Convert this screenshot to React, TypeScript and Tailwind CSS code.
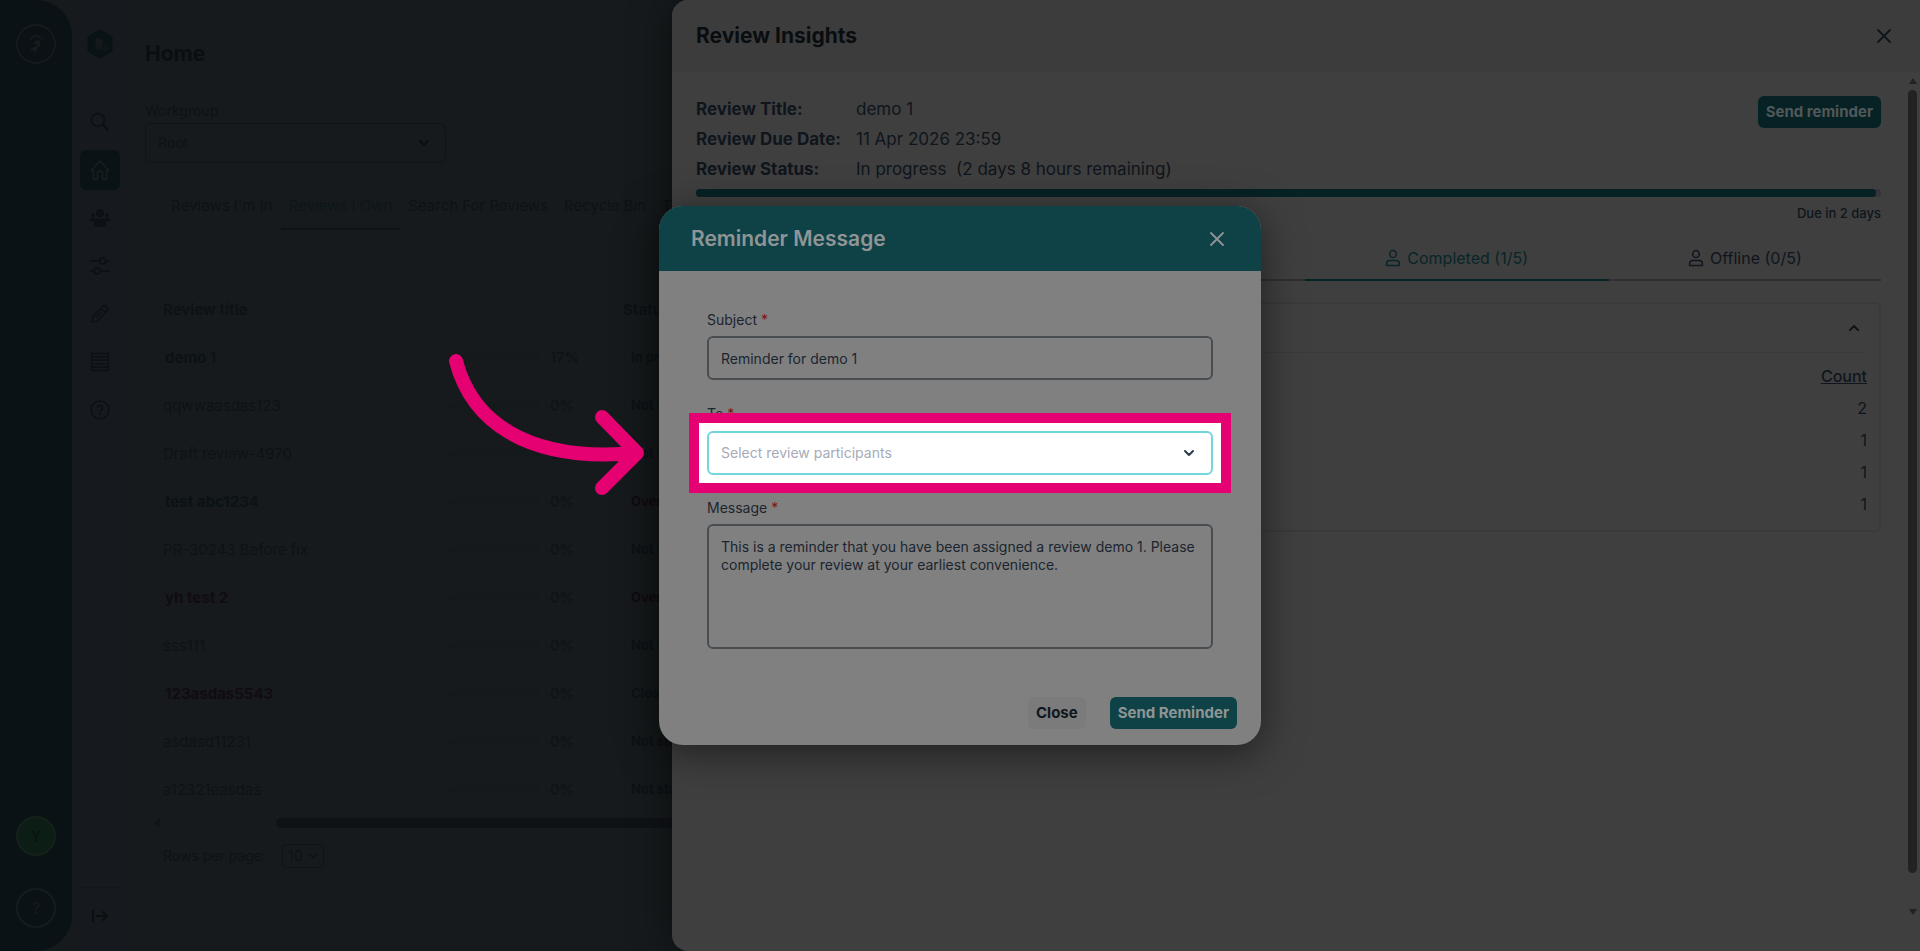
import React from "react";

type Row = {
  title: string;
  tone: "link" | "plain" | "late";
  progress: number;
  status: string;
  statusTone: "plain" | "late";
};

const rows: Row[] = [
  { title: "demo 1", tone: "link", progress: 17, status: "In progress", statusTone: "plain" },
  { title: "qqwwaasdas123", tone: "plain", progress: 0, status: "Not started", statusTone: "plain" },
  { title: "Draft review-4970", tone: "plain", progress: 0, status: "Not started", statusTone: "plain" },
  { title: "test abc1234", tone: "link", progress: 0, status: "Overdue", statusTone: "late" },
  { title: "PR-30243 Before fix", tone: "plain", progress: 0, status: "Not started", statusTone: "plain" },
  { title: "yh test 2", tone: "late", progress: 0, status: "Overdue", statusTone: "late" },
  { title: "sss111", tone: "plain", progress: 0, status: "Not started", statusTone: "plain" },
  { title: "123asdas5543", tone: "late", progress: 0, status: "Closed", statusTone: "plain" },
  { title: "asdasd11231", tone: "plain", progress: 0, status: "Not started", statusTone: "plain" },
  { title: "a12321easdas", tone: "plain", progress: 0, status: "Not started", statusTone: "plain" },
];

const titleTone = {
  link: "pl-[19px] font-bold text-[#0b1216]",
  plain: "pl-[17px] text-[#0e1216]",
  late: "pl-[19px] font-bold text-[#110c12]",
};

const counts = [2, 1, 1, 1];

function Chevron({ className }: { className: string }) {
  return (
    <svg viewBox="0 0 12 12" className={className} fill="none" stroke="currentColor" strokeWidth="2" strokeLinecap="round" strokeLinejoin="round" aria-hidden="true">
      <path d="M2 4l4 4 4-4" />
    </svg>
  );
}

function Cross({ className }: { className: string }) {
  return (
    <svg viewBox="0 0 16 16" className={className} fill="none" stroke="currentColor" strokeWidth="1.8" strokeLinecap="round" aria-hidden="true">
      <path d="M2 2l12 12M14 2L2 14" />
    </svg>
  );
}

function PersonIcon() {
  return (
    <svg viewBox="0 0 16 18" className="h-[18px] w-4" fill="none" stroke="currentColor" strokeWidth="1.5" aria-hidden="true">
      <ellipse cx="8" cy="5" rx="3.3" ry="3.6" />
      <path d="M1.6 16.4v-1.6a3.2 3.2 0 0 1 3.2-3.2h6.4a3.2 3.2 0 0 1 3.2 3.2v1.6z" strokeLinejoin="round" />
    </svg>
  );
}

function AppRail() {
  return (
    <nav aria-label="Applications" className="flex w-[72px] shrink-0 flex-col items-center rounded-r-[36px] bg-[#0a1215] pt-6 pb-[23px]">
      <a href="#" aria-label="Platform home" className="text-[#171b1e]">
        <svg viewBox="0 0 40 40" className="size-10" fill="none" aria-hidden="true">
          <circle cx="20" cy="20" r="19" stroke="currentColor" strokeWidth="1.8" />
          <path d="M13.5 15.5L20.5 11l7 4.5" stroke="currentColor" strokeWidth="1.8" />
          <path d="M18 18l4-2 2 1v5l-4 3-1-2 2-2v-1.500l-3 1zM15 24l3.500-1.500 2.500 1.500v3l-3 2-.500-3-2.500.500z" fill="currentColor" />
        </svg>
      </a>
      <div className="mt-auto flex flex-col items-center gap-8">
        <button aria-label="Account" className="flex size-10 items-center justify-center rounded-full border-2 border-[#15201b] bg-[#0b1d14] text-base text-[#0a1013]">Y</button>
        <button aria-label="Help" className="flex size-10 items-center justify-center rounded-full border-2 border-[#151c1f] text-base text-[#171c20]">?</button>
      </div>
    </nav>
  );
}

function ModuleRail() {
  const item = "flex size-10 items-center justify-center rounded-md text-[#0d1014]";
  return (
    <nav aria-label="Reviews" className="flex w-[58px] shrink-0 flex-col items-center border-r border-[#14171b] bg-[#16191d] pt-6 pr-px">
      <a href="#" aria-label="Reviews" className="flex size-10 items-center justify-center">
        <svg viewBox="0 0 26 30" className="h-[30px] w-[26px]" aria-hidden="true">
          <path d="M13 .5l12.500 7v15L13 29.500.500 22.500v-15z" fill="#091215" />
          <path d="M8.500 9h4.500l3 3v3.500a3 3 0 0 0-2 5H8.500z" fill="#14191c" />
          <path d="M13.500 9l2.800 2.800h-2.800z" fill="#14191c" />
          <circle cx="17.300" cy="17.700" r="3" fill="none" stroke="#14191c" strokeWidth="1.300" />
          <path d="M16 17.700l1 1 1.700-1.800" fill="none" stroke="#14191c" />
        </svg>
      </a>
      <div className="mt-[38px] flex flex-col gap-2">
        <a href="#" aria-label="Search" className={item}>
          <svg viewBox="0 0 20 20" className="size-5" fill="none" stroke="currentColor" strokeWidth="1.600" aria-hidden="true">
            <circle cx="8" cy="8" r="6.500" />
            <path d="M12.800 12.800L18.500 18.500" strokeWidth="2" />
          </svg>
        </a>
        <a href="#" aria-label="Home" className="flex size-10 items-center justify-center rounded-md bg-[#091316] text-[#181d20]">
          <svg viewBox="0 0 20 20" className="size-5" fill="none" stroke="currentColor" strokeWidth="1.500" strokeLinejoin="round" aria-hidden="true">
            <path d="M10 1L1 10.500h2.500v8.700h4v-5.700a2.500 2.500 0 0 1 5 0v5.700h4v-8.700H19z" />
          </svg>
        </a>
        <a href="#" aria-label="Groups" className={item}>
          <svg viewBox="0 0 20 20" className="size-5" fill="currentColor" aria-hidden="true">
            <circle cx="10" cy="5" r="4" />
            <circle cx="3" cy="7.200" r="2" />
            <circle cx="17" cy="7.200" r="2" />
            <path d="M0 13.500V12q0-2 2-2h2.500q1.500 1 5.500 1t5.500-1H18q2 0 2 2v1.500h-4V19H4v-5.500z" />
          </svg>
        </a>
        <a href="#" aria-label="Settings" className={item}>
          <svg viewBox="0 0 20 20" className="size-5" fill="none" stroke="currentColor" strokeWidth="1.700" aria-hidden="true">
            <path d="M0 5h9M16 5h4M0 15h3.500M10.500 15H20" />
            <circle cx="12.700" cy="5" r="3" />
            <circle cx="7" cy="15" r="3" />
          </svg>
        </a>
        <a href="#" aria-label="Edit" className={item}>
          <svg viewBox="0 0 20 20" className="size-5" fill="none" stroke="currentColor" strokeWidth="1.500" strokeLinejoin="round" aria-hidden="true">
            <path d="M2 18l1-5.500L12.800 2.200a2 2 0 0 1 2.900 0l1.500 1.500a2 2 0 0 1 0 2.900L7.500 17zM11 4.500L15 8.500M6 13.500l5-5" />
          </svg>
        </a>
        <a href="#" aria-label="List" className={item}>
          <svg viewBox="0 0 20 20" className="size-5" fill="none" stroke="currentColor" strokeWidth="1.500" aria-hidden="true">
            <rect x="1.500" y="1.500" width="17" height="17" rx="1" />
            <path d="M2 5h16M2 8.300h16M2 11.700h16M2 15h16" />
          </svg>
        </a>
        <a href="#" aria-label="Help" className={item}>
          <svg viewBox="0 0 20 20" className="size-5" fill="none" stroke="currentColor" strokeWidth="1.500" aria-hidden="true">
            <circle cx="10" cy="10" r="9" />
            <path d="M7.500 8a2.500 2.500 0 1 1 3.700 2.200q-1.200.700-1.200 1.800M10 13.500v1.700" />
          </svg>
        </a>
      </div>
      <div className="mt-auto flex h-16 w-10 justify-center border-t border-[#14171a] pt-5">
        <button aria-label="Expand menu" className="h-4 text-[#0b0f12]">
          <svg viewBox="0 0 16 14" className="h-[14px] w-4" fill="none" stroke="currentColor" strokeWidth="1.800" aria-hidden="true">
            <path d="M1 1v12M4 7h11M10.500 2.500L15 7l-4.500 4.500" />
          </svg>
        </button>
      </div>
    </nav>
  );
}

function HomePage() {
  return (
    <main className="flex min-w-0 flex-1 flex-col overflow-hidden pt-10 pl-[15px] text-[#0d1216]">
      <h1 className="text-[21px] leading-7 font-bold text-[#0a0e12]">Home</h1>
      <div className="mt-8 flex flex-col">
        <label htmlFor="workgroup" className="h-[23px] text-sm leading-[22px]">Workgroup</label>
        <div className="relative w-[301px]">
          <select id="workgroup" className="h-10 w-full appearance-none rounded-md border border-[#0f1418] pl-3 text-sm">
            <option>Root</option>
          </select>
          <Chevron className="pointer-events-none absolute top-[14px] right-4 size-3 text-[#0b0f13]" />
        </div>
      </div>
      <section className="mt-[17px] w-[1740px] rounded-md border border-[#14181b]">
        <div role="tablist" className="flex px-[17px] text-[15px] leading-[22px]">
          <button role="tab" aria-selected="false" className="px-2 pt-[14px] pb-[13px]">Reviews I'm In</button>
          <button role="tab" aria-selected="true" className="border-b-2 border-[#0a1417] px-2 pt-[14px] pb-[11px] text-[#0c161b]">Reviews I Own</button>
          <button role="tab" aria-selected="false" className="px-2 pt-[14px] pb-[13px]">Search For Reviews</button>
          <button role="tab" aria-selected="false" className="px-2 pt-[14px] pb-[13px]">Recycle Bin</button>
          <button role="tab" aria-selected="false" className="px-2 pt-[14px] pb-[13px]">Templates</button>
        </div>
        <table className="mt-14 w-full table-fixed text-left text-[15px]">
          <colgroup>
            <col className="w-[302px]" />
            <col className="w-[175px]" />
            <col />
          </colgroup>
          <thead>
            <tr className="h-12">
              <th className="pl-[17px] font-bold">Review title</th>
              <th aria-label="Progress" />
              <th className="font-bold">Status</th>
            </tr>
          </thead>
          <tbody>
            {rows.map((row) => (
              <tr key={row.title} className="h-12">
                <td className={titleTone[row.tone]}>{row.title}</td>
                <td>
                  <div className="flex items-center gap-[10px]">
                    <span className="h-2 w-[92px] rounded-full bg-[#14191c]" />
                    <span>{row.progress}%</span>
                  </div>
                </td>
                <td className={row.statusTone === "late" ? "pl-2 text-[13px] font-bold text-[#120b11]" : "pl-2 text-[13px] font-bold"}>{row.status}</td>
              </tr>
            ))}
          </tbody>
        </table>
        <div className="flex h-[18px] items-center pl-2">
          <svg viewBox="0 0 6 10" className="h-[10px] w-[6px]" aria-hidden="true"><path d="M6 0v10L0 5z" fill="#101418" /></svg>
          <div className="ml-[116px] h-[10px] flex-1 rounded-full bg-[#0f1215]" />
        </div>
        <div className="flex h-12 items-center gap-4 pl-[17px] text-sm">
          <label htmlFor="page-size">Rows per page:</label>
          <div className="relative">
            <select id="page-size" className="h-6 w-[42px] appearance-none rounded-sm border border-[#0f1418] pl-[5px]">
              <option>10</option>
            </select>
            <Chevron className="pointer-events-none absolute top-[7px] right-[6px] size-[10px]" />
          </div>
        </div>
      </section>
    </main>
  );
}

function InsightsPanel() {
  return (
    <aside aria-label="Review Insights" className="absolute inset-y-0 right-0 flex w-[65%] flex-col overflow-hidden rounded-l-2xl bg-[#3f3f3f] text-[#0f151c] shadow-[0_0_40px_rgba(0,0,0,0.5)]">
      <header className="flex h-[72px] shrink-0 items-center justify-between bg-[#3c3c3c] pr-7 pl-6">
        <h2 className="text-[21px] font-bold text-[#0a0d10]">Review Insights</h2>
        <button aria-label="Close panel"><Cross className="size-4" /></button>
      </header>
      <div className="flex min-h-0 flex-1">
        <div className="min-w-0 flex-1 pt-[22px] pr-[27px] pl-6">
          <div className="flex items-start justify-between">
            <dl className="grid grid-cols-[160px_auto] text-[17px] leading-[30px]">
              <dt className="font-bold">Review Title:</dt><dd>demo 1</dd>
              <dt className="font-bold">Review Due Date:</dt><dd>11 Apr 2026 23:59</dd>
              <dt className="font-bold">Review Status:</dt><dd>In progress&nbsp; (2 days 8 hours remaining)</dd>
            </dl>
            <button className="mt-[2px] h-8 rounded-md bg-[#072224] px-2 text-[15px] font-bold text-[#505859]">Send reminder</button>
          </div>
          <div className="mt-[5px] h-2 rounded-full bg-[#353537]">
            <div className="h-2 w-[99.6%] rounded-full bg-[#072224]" />
          </div>
          <p className="mt-[5px] text-right text-[13px] leading-[22px] font-medium">Due in 2 days</p>
          <div role="tablist" className="mt-3 grid grid-cols-[608fr_304fr_272fr] text-base">
            <div className="h-[45px] border-b-2 border-[#2f2f30]" />
            <button role="tab" aria-selected="true" className="flex items-center justify-center gap-[6px] border-b-2 border-[#062325] text-[#082628]"><PersonIcon />Completed (1/5)</button>
            <button role="tab" aria-selected="false" className="flex items-center justify-center gap-[6px] border-b-2 border-[#2f2f30]"><PersonIcon />Offline (0/5)</button>
          </div>
          <section className="mt-[21px] rounded-md border-2 border-[#3a3a3b] px-3 pb-[10px]">
            <div className="flex h-[49px] items-center justify-end border-b border-[#3a3a3b] pr-[7px]">
              <button aria-label="Collapse section"><Chevron className="size-3 rotate-180" /></button>
            </div>
            <table className="mt-[7px] w-full text-right text-base">
              <thead>
                <tr className="h-8"><th className="font-medium underline">Count</th></tr>
              </thead>
              <tbody>
                {counts.map((count, i) => (
                  <tr key={i} className="h-8"><td>{count}</td></tr>
                ))}
              </tbody>
            </table>
          </section>
        </div>
        <div aria-hidden="true" className="flex w-3 flex-col items-center pt-[6px] pr-[3px] pb-9">
          <svg viewBox="0 0 8 6" className="h-[6px] w-2"><path d="M4 0l4 6H0z" fill="#222" /></svg>
          <div className="mt-[6px] w-[9px] flex-1 rounded-full bg-[#222]" />
          <svg viewBox="0 0 8 6" className="mt-9 h-[6px] w-2"><path d="M4 6l4-6H0z" fill="#222" /></svg>
        </div>
      </div>
    </aside>
  );
}

function Required() {
  return <span className="text-[#7a1414]"> *</span>;
}

function ReminderDialog() {
  return (
    <div className="absolute inset-0 flex items-center justify-center">
      <form role="dialog" aria-labelledby="reminder-title" className="w-[602px] rounded-3xl bg-[#808080] text-sm text-[#1b252f] shadow-[0_8px_40px_rgba(0,0,0,0.5)]">
        <header className="flex h-[65px] items-center justify-between rounded-t-3xl bg-[#0f4246] pr-9 pl-8 text-[#8f9596]">
          <h2 id="reminder-title" className="text-[21px] font-semibold">Reminder Message</h2>
          <button type="button" aria-label="Close dialog"><Cross className="size-4" /></button>
        </header>
        <div className="flex flex-col px-12 pt-[38px]">
          <label htmlFor="subject" className="h-[27px] leading-[22px]">Subject<Required /></label>
          <input id="subject" defaultValue="Reminder for demo 1" className="h-11 rounded-md border-2 border-[#484d52] px-3 outline-none" />
          <label htmlFor="recipients" className="mt-[23px] h-7 leading-[22px]">To<Required /></label>
          <div className="relative">
            <div className="absolute -inset-[18px] border-10 border-[#e50171] bg-white" />
            <select id="recipients" className="relative h-11 w-full appearance-none rounded-md border-2 border-[#71d6dd] bg-white px-3 text-[#a6abb8] outline-none">
              <option>Select review participants</option>
            </select>
            <Chevron className="pointer-events-none absolute top-4 right-[18px] size-3 text-[#2b3a4a]" />
          </div>
          <label htmlFor="message" className="mt-[22px] h-[27px] leading-[22px]">Message<Required /></label>
          <textarea id="message" defaultValue="This is a reminder that you have been assigned a review demo 1. Please complete your review at your earliest convenience." className="h-[125px] resize-none rounded-md border-2 border-[#484d52] px-3 pt-3 leading-[18px] outline-none" />
        </div>
        <footer className="flex justify-end gap-6 px-6 pt-12 pb-4 text-[15px] font-bold">
          <button type="button" className="h-8 rounded-md bg-[#7b7b7c] px-2 text-[#10161d]">Close</button>
          <button type="submit" className="h-8 rounded-md bg-[#0f4246] px-2 text-[#8f9596]">Send Reminder</button>
        </footer>
      </form>
      <svg viewBox="0 0 200 150" className="pointer-events-none absolute top-[351px] left-[446px] h-[150px] w-[200px]" fill="none" stroke="#e50171" strokeWidth="14" strokeLinecap="round" strokeLinejoin="round" aria-hidden="true">
        <path d="M10 10C25 68 78 112 190 102M156 66l35 36-35 35" />
      </svg>
    </div>
  );
}

export default function App() {
  return (
    <div className="relative flex h-screen overflow-hidden bg-[#161a1c] font-['Inter',sans-serif]">
      <AppRail />
      <ModuleRail />
      <HomePage />
      <InsightsPanel />
      <ReminderDialog />
    </div>
  );
}
